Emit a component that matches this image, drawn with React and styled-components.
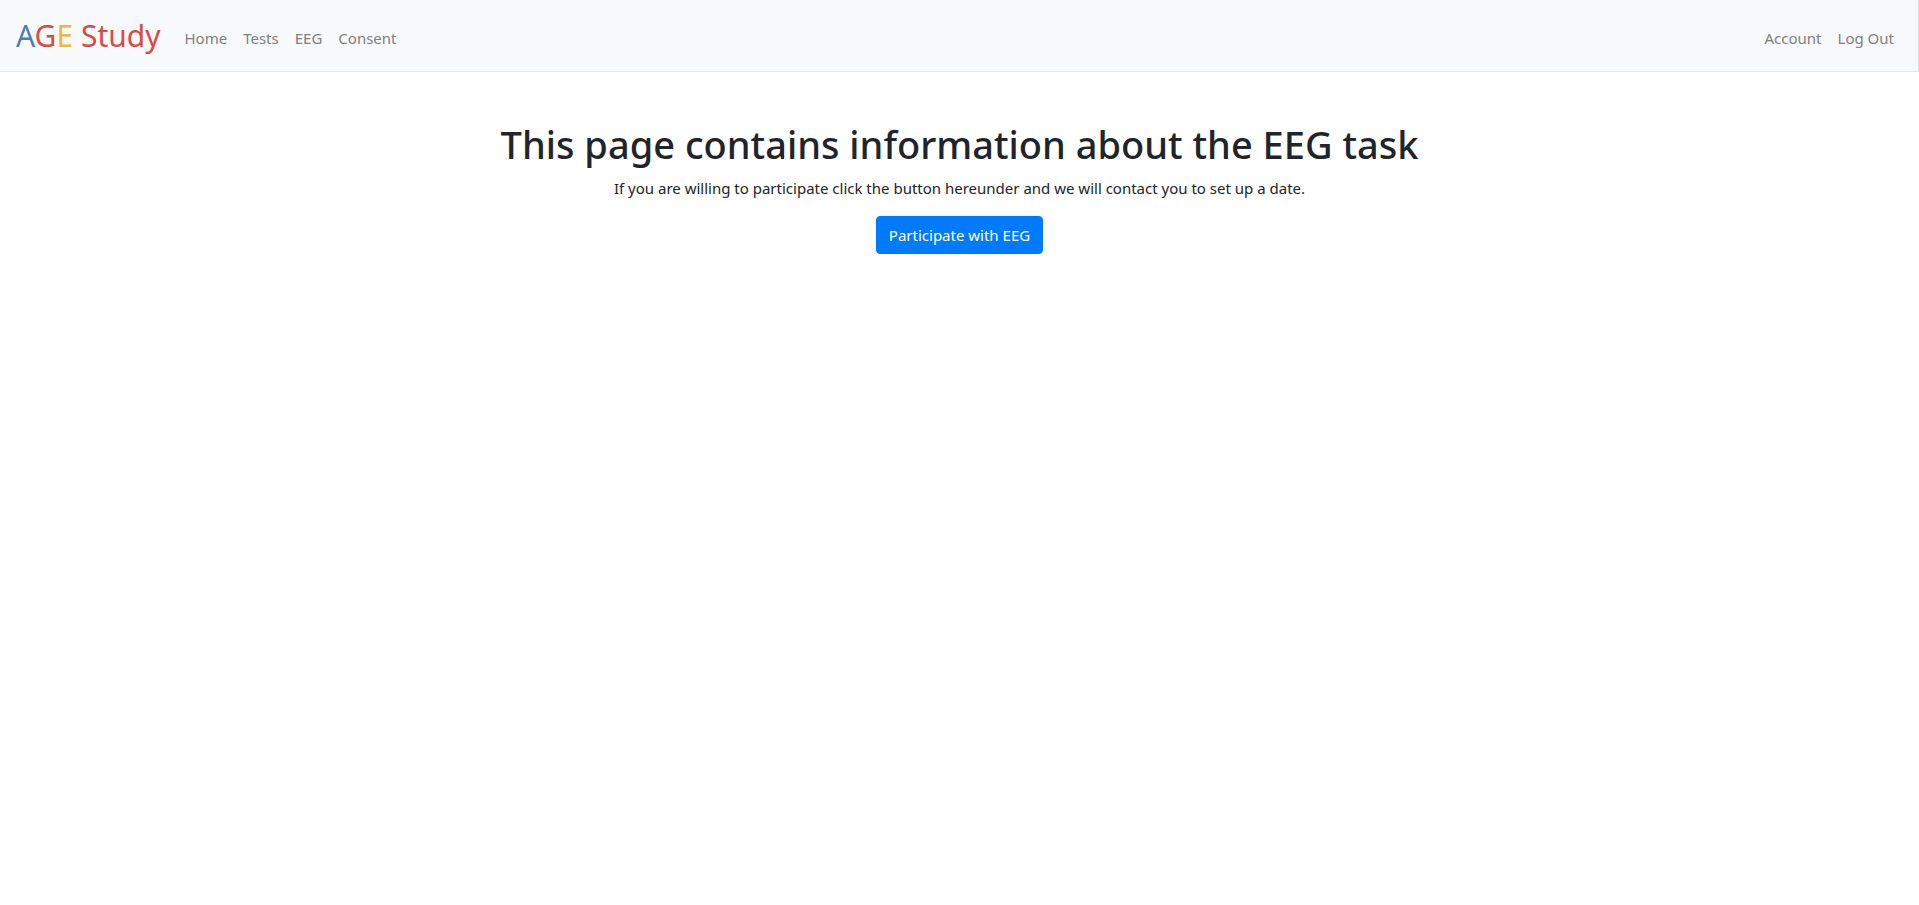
import React from "react";
import styled, { createGlobalStyle } from "styled-components";

const GlobalStyle = createGlobalStyle`
  *, *::before, *::after { box-sizing: border-box; }
  body {
    margin: 0;
    background: #fff;
    color: #212529;
    font-family: "Noto Sans", "Open Sans", sans-serif;
    font-size: 15px;
    line-height: 24px;
  }
`;

const Navbar = styled.nav`
  display: flex;
  align-items: center;
  height: 72px;
  padding: 0 16px;
  background: #f8f9fa;
  border: solid #e7e7e7;
  border-width: 0 1px 1px 0;
`;

const Brand = styled.a`
  margin-right: 16px;
  font-size: 30px;
  line-height: 48px;
  color: #db4a45;
  text-decoration: none;
  white-space: nowrap;
`;

const Letter = styled.span`
  color: ${(p) => p.$color};
`;

const NavList = styled.ul`
  display: flex;
  margin: 0;
  padding: 4px 0 0;
  list-style: none;

  &:last-child { margin-left: auto; }
`;

const NavLink = styled.a`
  display: block;
  padding: 8px;
  color: #7f8081;
  text-decoration: none;
  white-space: nowrap;
`;

const Main = styled.main`
  display: flex;
  flex-direction: column;
  align-items: center;
  padding: 48px 16px;
  text-align: center;
`;

const Title = styled.h1`
  margin: 0 0 8px;
  font-size: 38px;
  line-height: 48px;
  font-weight: 500;
`;

const Lead = styled.p`
  margin: 0 0 16px;
`;

const Button = styled.button`
  padding: 6px 12px;
  border: 1px solid #007bff;
  border-radius: 4px;
  background: #007bff;
  color: #fff;
  font: inherit;
  cursor: pointer;
`;

const mainLinks = ["Home", "Tests", "EEG", "Consent"];
const userLinks = ["Account", "Log Out"];

function Links({ items }) {
  return (
    <NavList>
      {items.map((label) => (
        <li key={label}>
          <NavLink href="#">{label}</NavLink>
        </li>
      ))}
    </NavList>
  );
}

export default function App() {
  return (
    <>
      <GlobalStyle />
      <Navbar>
        <Brand href="#">
          <Letter $color="#4f7cba">A</Letter>G<Letter $color="#f2b63f">E</Letter> Study
        </Brand>
        <Links items={mainLinks} />
        <Links items={userLinks} />
      </Navbar>
      <Main>
        <Title>This page contains information about the EEG task</Title>
        <Lead>
          If you are willing to participate click the button hereunder and we will contact you to set up a date.
        </Lead>
        <Button type="button">Participate with EEG</Button>
      </Main>
    </>
  );
}
